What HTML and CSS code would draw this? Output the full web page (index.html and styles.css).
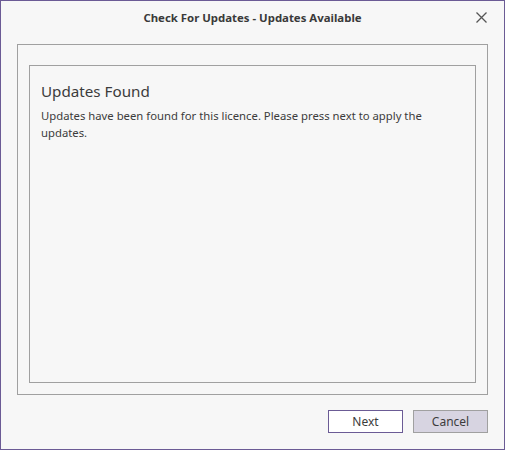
FILE: index.html
```html
<!DOCTYPE html>
<html lang="en">
<head>
    <meta charset="UTF-8">
    <title>Check For Updates - Updates Available</title>
    <link rel="stylesheet" href="styles.css">
</head>
<body>
    <div class="window">
        <div class="titlebar">
            <span class="title">Check For Updates - Updates Available</span>
            <button class="close" aria-label="Close">
                <svg width="11" height="11" viewBox="0 0 11 11">
                    <path d="M0.5 0.5 L10.5 10.5 M10.5 0.5 L0.5 10.5" stroke="#555" stroke-width="1.3" fill="none"/>
                </svg>
            </button>
        </div>
        <div class="content">
            <div class="outer-box">
                <div class="inner-box">
                    <h2>Updates Found</h2>
                    <p>Updates have been found for this licence. Please press next to apply the updates.</p>
                </div>
            </div>
            <div class="buttons">
                <button class="btn primary">Next</button>
                <button class="btn secondary">Cancel</button>
            </div>
        </div>
    </div>
</body>
</html>
```

FILE: styles.css
```css
html, body {
    margin: 0;
    padding: 0;
}
body {
    font-family: "Noto Sans", "Open Sans", sans-serif;
    color: #3c3c3c;
}
.window {
    width: 505px;
    height: 450px;
    box-sizing: border-box;
    border: 1px solid #6b5b95;
    background-color: #f7f7f7;
    display: flex;
    flex-direction: column;
}
.titlebar {
    height: 32px;
    position: relative;
    display: flex;
    align-items: center;
    justify-content: center;
}
.title {
    font-size: 11.4px;
    font-weight: bold;
    color: #3a3a3a;
}
.close {
    position: absolute;
    right: 17px;
    top: 11px;
    padding: 0;
    border: none;
    background: none;
    width: 11px;
    height: 11px;
    display: flex;
}
.content {
    flex: 1;
    padding: 11px 16px 16px 16px;
    display: flex;
    flex-direction: column;
}
.outer-box {
    height: 351px;
    box-sizing: border-box;
    border: 1px solid #a0a0a0;
    padding: 20px 11px 11px 11px;
}
.inner-box {
    height: 100%;
    box-sizing: border-box;
    border: 1px solid #a0a0a0;
    padding: 15px 11px;
}
h2 {
    margin: 0 0 6px 0;
    font-size: 15.2px;
    font-weight: normal;
    color: #3c3c3c;
    line-height: 20px;
}
p {
    margin: 0;
    font-size: 11.3px;
    line-height: 17px;
    color: #3c3c3c;
    max-width: 400px;
}
.buttons {
    display: flex;
    justify-content: flex-end;
    gap: 10px;
    margin-top: 15px;
}
.btn {
    width: 75px;
    height: 23px;
    box-sizing: border-box;
    font-family: "Noto Sans", sans-serif;
    font-size: 12px;
    color: #3c3c3c;
    padding: 0;
}
.primary {
    background-color: #ffffff;
    border: 1px solid #6b5b95;
}
.secondary {
    background-color: #d7d4e1;
    border: 1px solid #a0a0a0;
}
```
